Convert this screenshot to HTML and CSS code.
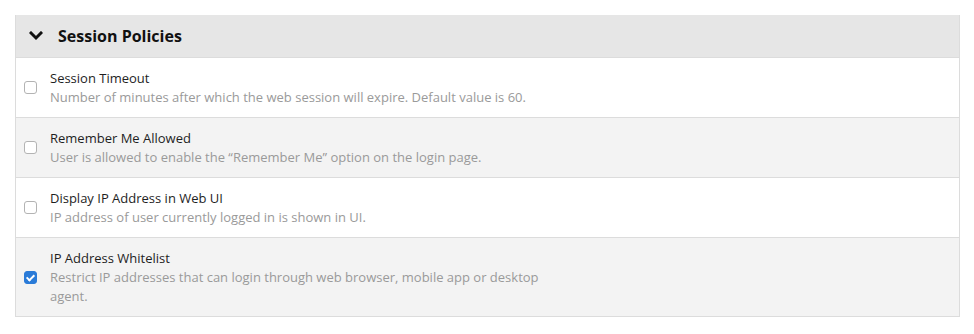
FILE: index.html
```html
<!DOCTYPE html>
<html>
<head>
<meta charset="utf-8">
<link rel="stylesheet" href="styles.css">
</head>
<body>
<section class="panel">
  <header class="panel-head">
    <svg class="chev" width="14" height="10" viewBox="0 0 14 10"><polyline points="2,2 7,7 12,2" fill="none" stroke="#111" stroke-width="3" stroke-linecap="square"/></svg>
    <h2 class="panel-title">Session Policies</h2>
  </header>
  <div class="row">
    <input type="checkbox" class="cb">
    <div class="txt">
      <div class="title">Session Timeout</div>
      <div class="desc">Number of minutes after which the web session will expire. Default value is 60.</div>
    </div>
  </div>
  <div class="row alt">
    <input type="checkbox" class="cb">
    <div class="txt">
      <div class="title">Remember Me Allowed</div>
      <div class="desc">User is allowed to enable the “Remember Me” option on the login page.</div>
    </div>
  </div>
  <div class="row">
    <input type="checkbox" class="cb">
    <div class="txt">
      <div class="title">Display IP Address in Web UI</div>
      <div class="desc">IP address of user currently logged in is shown in UI.</div>
    </div>
  </div>
  <div class="row alt">
    <input type="checkbox" class="cb" checked>
    <div class="txt">
      <div class="title">IP Address Whitelist</div>
      <div class="desc">Restrict IP addresses that can login through web browser, mobile app or desktop agent.</div>
    </div>
  </div>
</section>
</body>
</html>
```
FILE: styles.css
```css
html, body { margin: 0; padding: 0; background: #fff; }
body { padding: 15px 14px 0 15px; font-family: "Open Sans", "Liberation Sans", sans-serif; }
.panel { border: 1px solid #dcdcdc; border-top: 0; }
.panel-head { height: 43px; background: #e6e6e6; display: flex; align-items: center; padding-left: 13px; border-bottom: 1px solid #dcdcdc; box-sizing: border-box; }
.chev { display: block; margin-right: 15px; }
.panel-title { margin: 0; font-size: 16px; font-weight: 700; color: #111; }
.row { display: flex; align-items: center; padding: 10px 0 10px 8px; border-bottom: 1px solid #dcdcdc; background: #fff; }
.row:last-child { border-bottom: 0; }
.row.alt { background: #f3f3f3; }
.cb { -webkit-appearance: none; appearance: none; margin: 0 13px 0 0; width: 13px; height: 13px; box-sizing: border-box; border: 1px solid #b3b3b3; border-radius: 3px; background: #fff; position: relative; flex: none; }
.cb:checked { background: #2a7bd8; border-color: #2a7bd8; }
.cb:checked::after { content: ""; position: absolute; left: 3px; top: 1px; width: 3px; height: 6px; border: solid #fff; border-width: 0 2px 2px 0; transform: rotate(45deg); }
.txt { max-width: 510px; }
.title { font-size: 13px; line-height: 20px; color: #1e1e1e; }
.desc { font-size: 13px; line-height: 19px; color: #9a9a9a; }
```
